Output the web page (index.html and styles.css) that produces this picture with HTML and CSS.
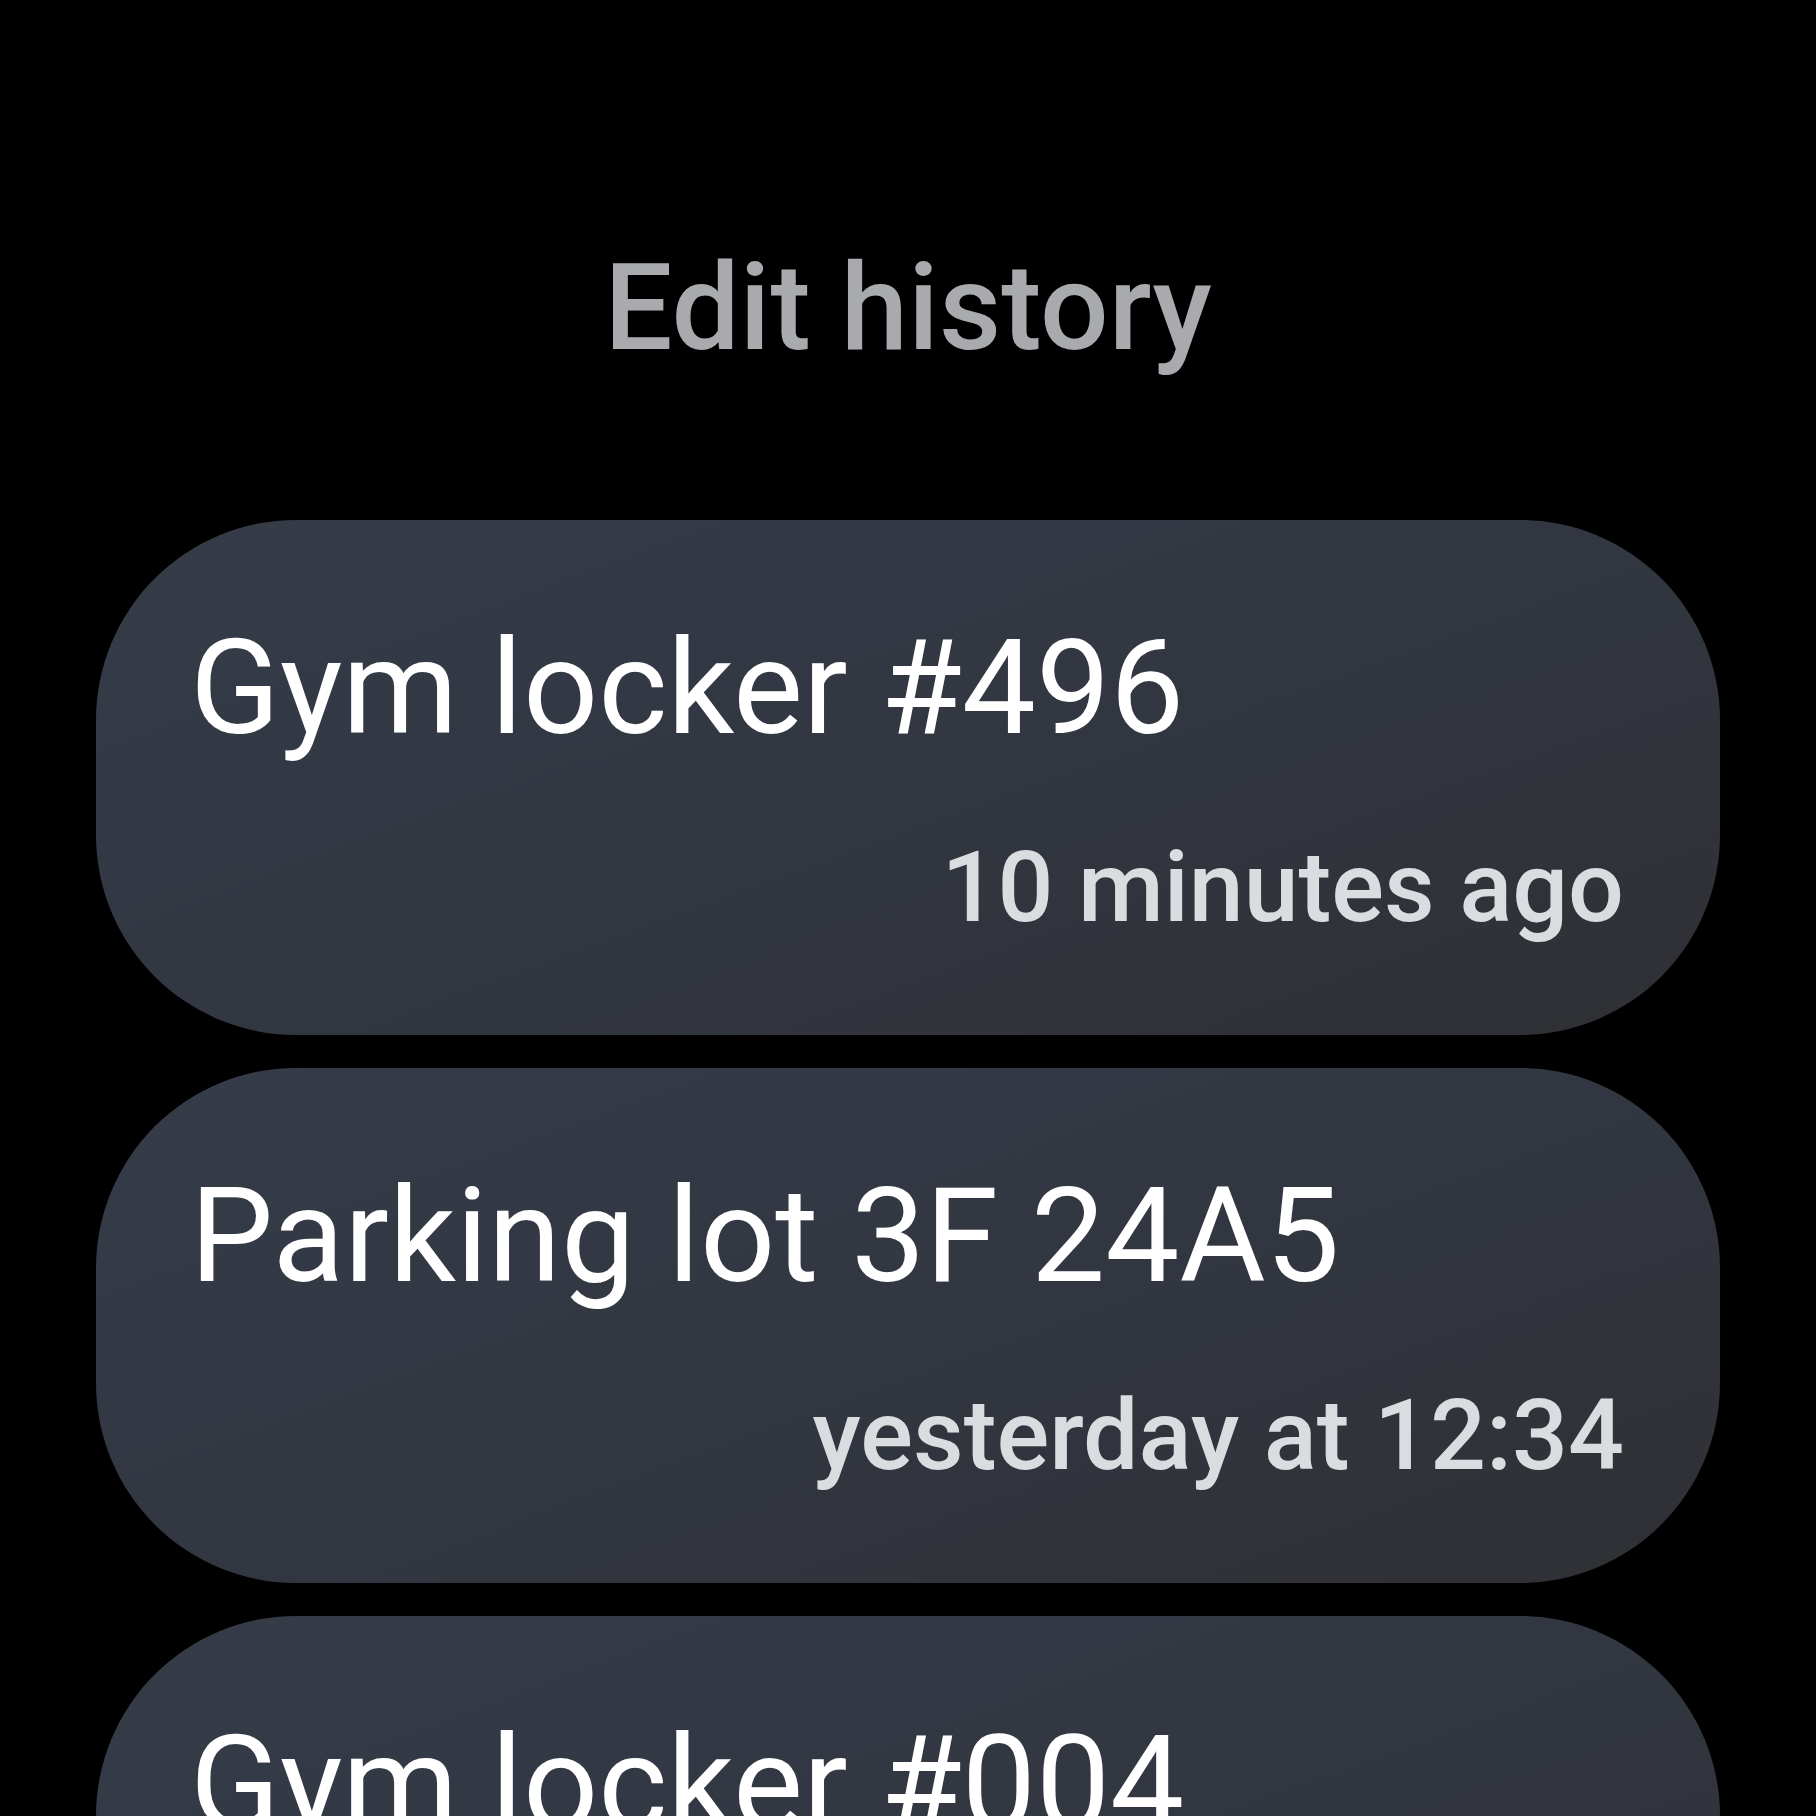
FILE: index.html
```html
<!DOCTYPE html>
<html lang="en">
<head>
<meta charset="utf-8">
<title>Edit history</title>
<link rel="stylesheet" href="styles.css">
</head>
<body>
<main class="screen">
  <h1 class="title">Edit history</h1>
  <ul class="list">
    <li class="chip">
      <div class="chip-label">Gym locker #496</div>
      <div class="chip-time">10 minutes ago</div>
    </li>
    <li class="chip">
      <div class="chip-label">Parking lot 3F 24A5</div>
      <div class="chip-time">yesterday at 12:34</div>
    </li>
    <li class="chip">
      <div class="chip-label">Gym locker #004</div>
      <div class="chip-time">2 days ago</div>
    </li>
  </ul>
</main>
</body>
</html>
```
FILE: styles.css
```css
html, body {
  margin: 0;
  padding: 0;
  background: #000;
  height: 1816px;
  overflow: hidden;
}

.screen {
  font-family: Roboto, "Noto Sans", sans-serif;
  padding: 248px 96px 0;
  display: flex;
  flex-direction: column;
}

.title {
  margin: 0 0 151px;
  font-size: 121px;
  line-height: 121px;
  font-weight: 500;
  color: #a8aaae;
  text-align: center;
}

.list {
  list-style: none;
  margin: 0;
  padding: 0;
  display: flex;
  flex-direction: column;
  gap: 33px;
}

.chip {
  height: 515px;
  box-sizing: border-box;
  border-radius: 200px;
  padding: 102px 96px 97px 94px;
  background: linear-gradient(160deg, #353c48 0%, #323742 45%, #2f3034 100%);
  display: flex;
  flex-direction: column;
  flex-shrink: 0;
}

.chip-label {
  font-size: 132px;
  line-height: 132px;
  font-weight: 400;
  color: #ffffff;
  white-space: nowrap;
}

.chip-time {
  margin-top: 84px;
  font-size: 98.5px;
  line-height: 100px;
  font-weight: 500;
  color: #dadce0;
  text-align: right;
  white-space: nowrap;
}
```
